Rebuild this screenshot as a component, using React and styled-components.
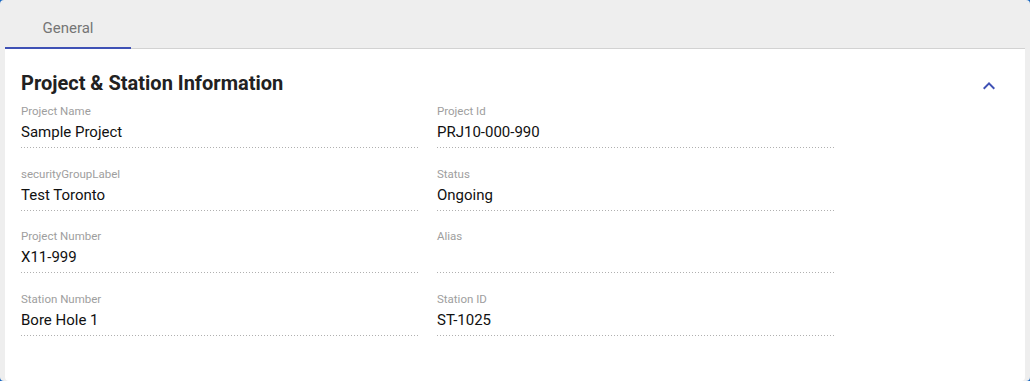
import React from 'react';
import styled, { createGlobalStyle } from 'styled-components';

const GlobalStyle = createGlobalStyle`
  html, body {
    margin: 0;
    padding: 0;
    background: #1565c0;
  }
  body {
    font-family: Roboto, "Noto Sans", Arial, sans-serif;
  }
`;

const Frame = styled.div`
  width: 1030px;
  height: 381px;
  box-sizing: border-box;
  background: #eeeeee;
  border-radius: 4px;
  padding: 0 5px;
  display: flex;
  flex-direction: column;
  overflow: hidden;
`;

const Tabs = styled.div`
  display: flex;
  height: 49px;
  border-bottom: 1px solid #d2d2d2;
  box-sizing: border-box;
`;

const Tab = styled.div`
  width: 126px;
  display: flex;
  align-items: center;
  justify-content: center;
  font-size: 15px;
  color: #757575;
  padding-top: 8px;
  box-sizing: border-box;
  border-bottom: 2px solid ${p => (p.active ? '#3f51b5' : 'transparent')};
  margin-bottom: -1px;
`;

const Card = styled.div`
  flex: 1;
  background: #ffffff;
  border-radius: 0 0 4px 4px;
  padding: 16px 12px 0 16px;
`;

const Header = styled.div`
  display: flex;
  align-items: center;
  justify-content: space-between;
  height: 36px;
`;

const Title = styled.h2`
  margin: 0;
  font-size: 20px;
  font-weight: 700;
  color: #212121;
`;

const Toggle = styled.div`
  width: 24px;
  height: 24px;
  margin-right: 12px;
  margin-top: 6px;
  color: #3f51b5;
  display: flex;
  align-items: center;
  justify-content: center;
`;

const Grid = styled.div`
  display: grid;
  grid-template-columns: 397px 398px;
  column-gap: 19px;
  row-gap: 15.67px;
`;

const Field = styled.div`
  display: flex;
  flex-direction: column;
  padding-top: 2px;
  padding-bottom: 5px;
  background-image: repeating-linear-gradient(to right, #b0b0b0 0 1px, transparent 1px 3px);
  background-size: 100% 1px;
  background-repeat: no-repeat;
  background-position: left bottom;
  height: 47px;
  box-sizing: border-box;
`;

const Label = styled.span`
  font-size: 11.5px;
  line-height: 16px;
  color: #9e9e9e;
`;

const Value = styled.span`
  font-size: 15px;
  line-height: 22px;
  margin-top: 2px;
  color: #111111;
  min-height: 22px;
`;

const fields = [
  ['Project Name', 'Sample Project'],
  ['Project Id', 'PRJ10-000-990'],
  ['securityGroupLabel', 'Test Toronto'],
  ['Status', 'Ongoing'],
  ['Project Number', 'X11-999'],
  ['Alias', ''],
  ['Station Number', 'Bore Hole 1'],
  ['Station ID', 'ST-1025'],
];

export default function App() {
  return (
    <>
      <GlobalStyle />
      <Frame>
        <Tabs>
          <Tab active>General</Tab>
        </Tabs>
        <Card>
          <Header>
            <Title>Project &amp; Station Information</Title>
            <Toggle>
              <svg width="24" height="24" viewBox="0 0 24 24" fill="currentColor">
                <path d="M12 8l-6 6 1.41 1.41L12 10.83l4.59 4.58L18 14z" />
              </svg>
            </Toggle>
          </Header>
          <Grid>
            {fields.map(([label, value]) => (
              <Field key={label}>
                <Label>{label}</Label>
                <Value>{value}</Value>
              </Field>
            ))}
          </Grid>
        </Card>
      </Frame>
    </>
  );
}
